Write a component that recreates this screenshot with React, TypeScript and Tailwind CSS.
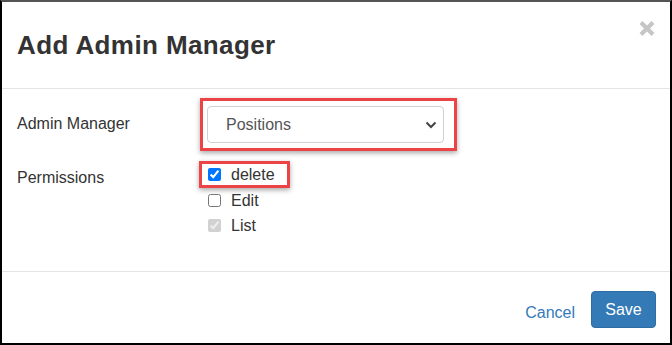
import React from "react";

export default function App() {
  return (
    <div
      className="w-[672px] h-[345px] bg-white flex flex-col border-l-2 border-t-2 border-r-2 border-b-2 border-l-black border-r-black border-b-black border-t-[#555] text-[#333]"
      style={{ fontFamily: '"Liberation Sans", Arial, sans-serif' }}
    >
      {/* header */}
      <div className="h-[87px] shrink-0 border-b border-[#e5e5e5] flex items-start justify-between pl-[15px] pr-[14px]">
        <h4 className="mt-[27px] text-[26px] leading-[32px] font-bold text-[#333] tracking-[0.4px]">
          Add Admin Manager
        </h4>
        <svg className="mt-[18px]" width="18" height="17" viewBox="0 0 18 17">
          <path d="M3 2.5 L15 14.5 M15 2.5 L3 14.5" stroke="#c6c6c6" strokeWidth="4.2" strokeLinecap="butt" />
        </svg>
      </div>

      {/* body */}
      <div className="h-[183px] shrink-0 border-b border-[#e5e5e5] pl-[15px] pt-[9px]">
        <div className="flex items-center">
          <div className="w-[183px] text-[16px] pb-[2px]">Admin Manager</div>
          <div className="border-[3px] border-[#ec4446] pl-[4px] pr-[10px] py-[5px] shadow-[0_2px_5px_rgba(0,0,0,0.35)]">
            <div className="relative w-[237px] h-[37px]">
              <select
                className="appearance-none w-full h-full rounded-[4px] border border-[#d0d0d0] bg-white pl-[18px] text-[16px] text-[#555] outline-none"
                style={{ fontFamily: '"Liberation Sans", Arial, sans-serif' }}
                defaultValue="Positions"
              >
                <option>Positions</option>
              </select>
              <svg
                className="absolute right-[7px] top-[15px] pointer-events-none"
                width="12"
                height="8"
                viewBox="0 0 12 8"
              >
                <path d="M1.5 1.5 L6 6 L10.5 1.5" stroke="#444" strokeWidth="2" fill="none" />
              </svg>
            </div>
          </div>
        </div>

        <div className="flex mt-[10px]">
          <div className="w-[182px] text-[16px] pt-[5px]">Permissions</div>
          <div className="flex flex-col">
            <div className="self-start border-[3px] border-[#ec4446] pl-[6px] pr-[12px] h-[27px] flex items-center shadow-[0_2px_5px_rgba(0,0,0,0.35)]">
              <input type="checkbox" defaultChecked className="w-[13px] h-[13px] m-0" />
              <span className="ml-[10px] text-[16px] leading-none">delete</span>
            </div>
            <div className="flex items-center h-[25px] pl-[9px]">
              <input type="checkbox" className="w-[13px] h-[13px] m-0" />
              <span className="ml-[10px] text-[16px] leading-none">Edit</span>
            </div>
            <div className="flex items-center h-[25px] pl-[9px]">
              <input type="checkbox" defaultChecked disabled className="w-[13px] h-[13px] m-0" />
              <span className="ml-[10px] text-[16px] leading-none">List</span>
            </div>
          </div>
        </div>
      </div>

      {/* footer */}
      <div className="flex-1 flex items-start justify-end pr-[14px] pt-[19px]">
        <button className="mt-[10px] mr-[16px] text-[16px] text-[#337ab7]">Cancel</button>
        <button className="w-[65px] h-[37px] rounded-[4px] bg-[#337ab7] border border-[#2e6da4] text-white text-[16px]">
          Save
        </button>
      </div>
    </div>
  );
}
